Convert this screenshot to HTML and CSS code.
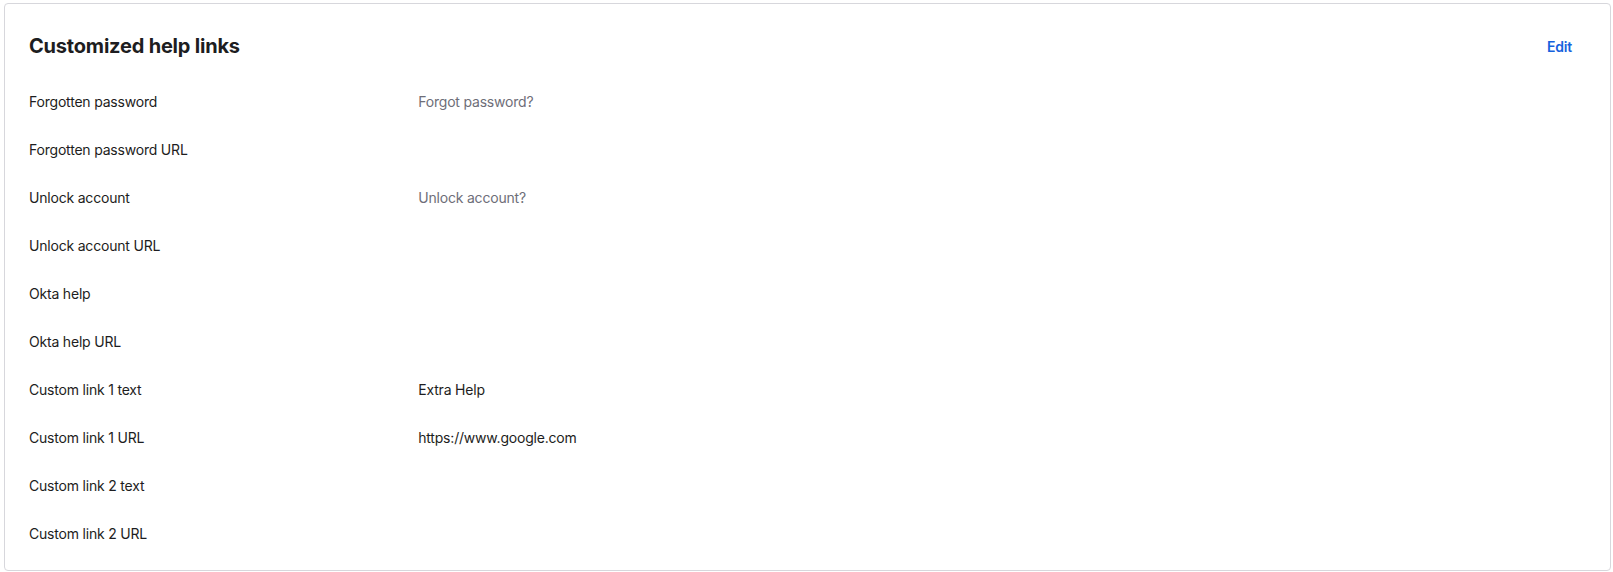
FILE: index.html
```html
<!DOCTYPE html>
<html lang="en">
<head>
<meta charset="utf-8">
<title>Customized help links</title>
<link rel="stylesheet" href="styles.css">
</head>
<body>
<section class="card">
  <header class="card-header">
    <h2 class="card-title">Customized help links</h2>
    <a class="edit-link" href="#">Edit</a>
  </header>
  <dl class="fields">
    <div class="row"><dt>Forgotten password</dt><dd class="muted">Forgot password?</dd></div>
    <div class="row"><dt>Forgotten password URL</dt><dd></dd></div>
    <div class="row"><dt>Unlock account</dt><dd class="muted">Unlock account?</dd></div>
    <div class="row"><dt>Unlock account URL</dt><dd></dd></div>
    <div class="row"><dt>Okta help</dt><dd></dd></div>
    <div class="row"><dt>Okta help URL</dt><dd></dd></div>
    <div class="row"><dt>Custom link 1 text</dt><dd>Extra Help</dd></div>
    <div class="row"><dt>Custom link 1 URL</dt><dd>https://www.google.com</dd></div>
    <div class="row"><dt>Custom link 2 text</dt><dd></dd></div>
    <div class="row"><dt>Custom link 2 URL</dt><dd></dd></div>
  </dl>
</section>
</body>
</html>
```

FILE: styles.css
```css
* { box-sizing: border-box; }
html, body { margin: 0; background: #ffffff; }
body {
  padding: 3px 2px 1px 4px;
  font-family: Inter, "Noto Sans", sans-serif;
  color: #1d1d21;
  font-size: 14px;
  letter-spacing: -0.2px;
}
.card {
  border: 1px solid #d7d7dc;
  border-radius: 4px;
  padding: 28px 24px 12px;
  background: #fff;
}
.card-header {
  display: flex;
  justify-content: space-between;
  align-items: center;
  height: 28px;
  padding-right: 14px;
}
.card-title {
  margin: 0;
  font-size: 20px;
  line-height: 28px;
  font-weight: 700;
  color: #1d1d21;
}
.edit-link {
  color: #1662dd;
  font-weight: 600;
  font-size: 14px;
  text-decoration: none;
}
.fields {
  margin: 18px 0 0;
}
.row {
  display: grid;
  grid-template-columns: 25% 1fr;
  height: 48px;
  align-items: center;
}
.row dt, .row dd {
  margin: 0;
  line-height: 20px;
}
.muted { color: #6e6e78; }
```
